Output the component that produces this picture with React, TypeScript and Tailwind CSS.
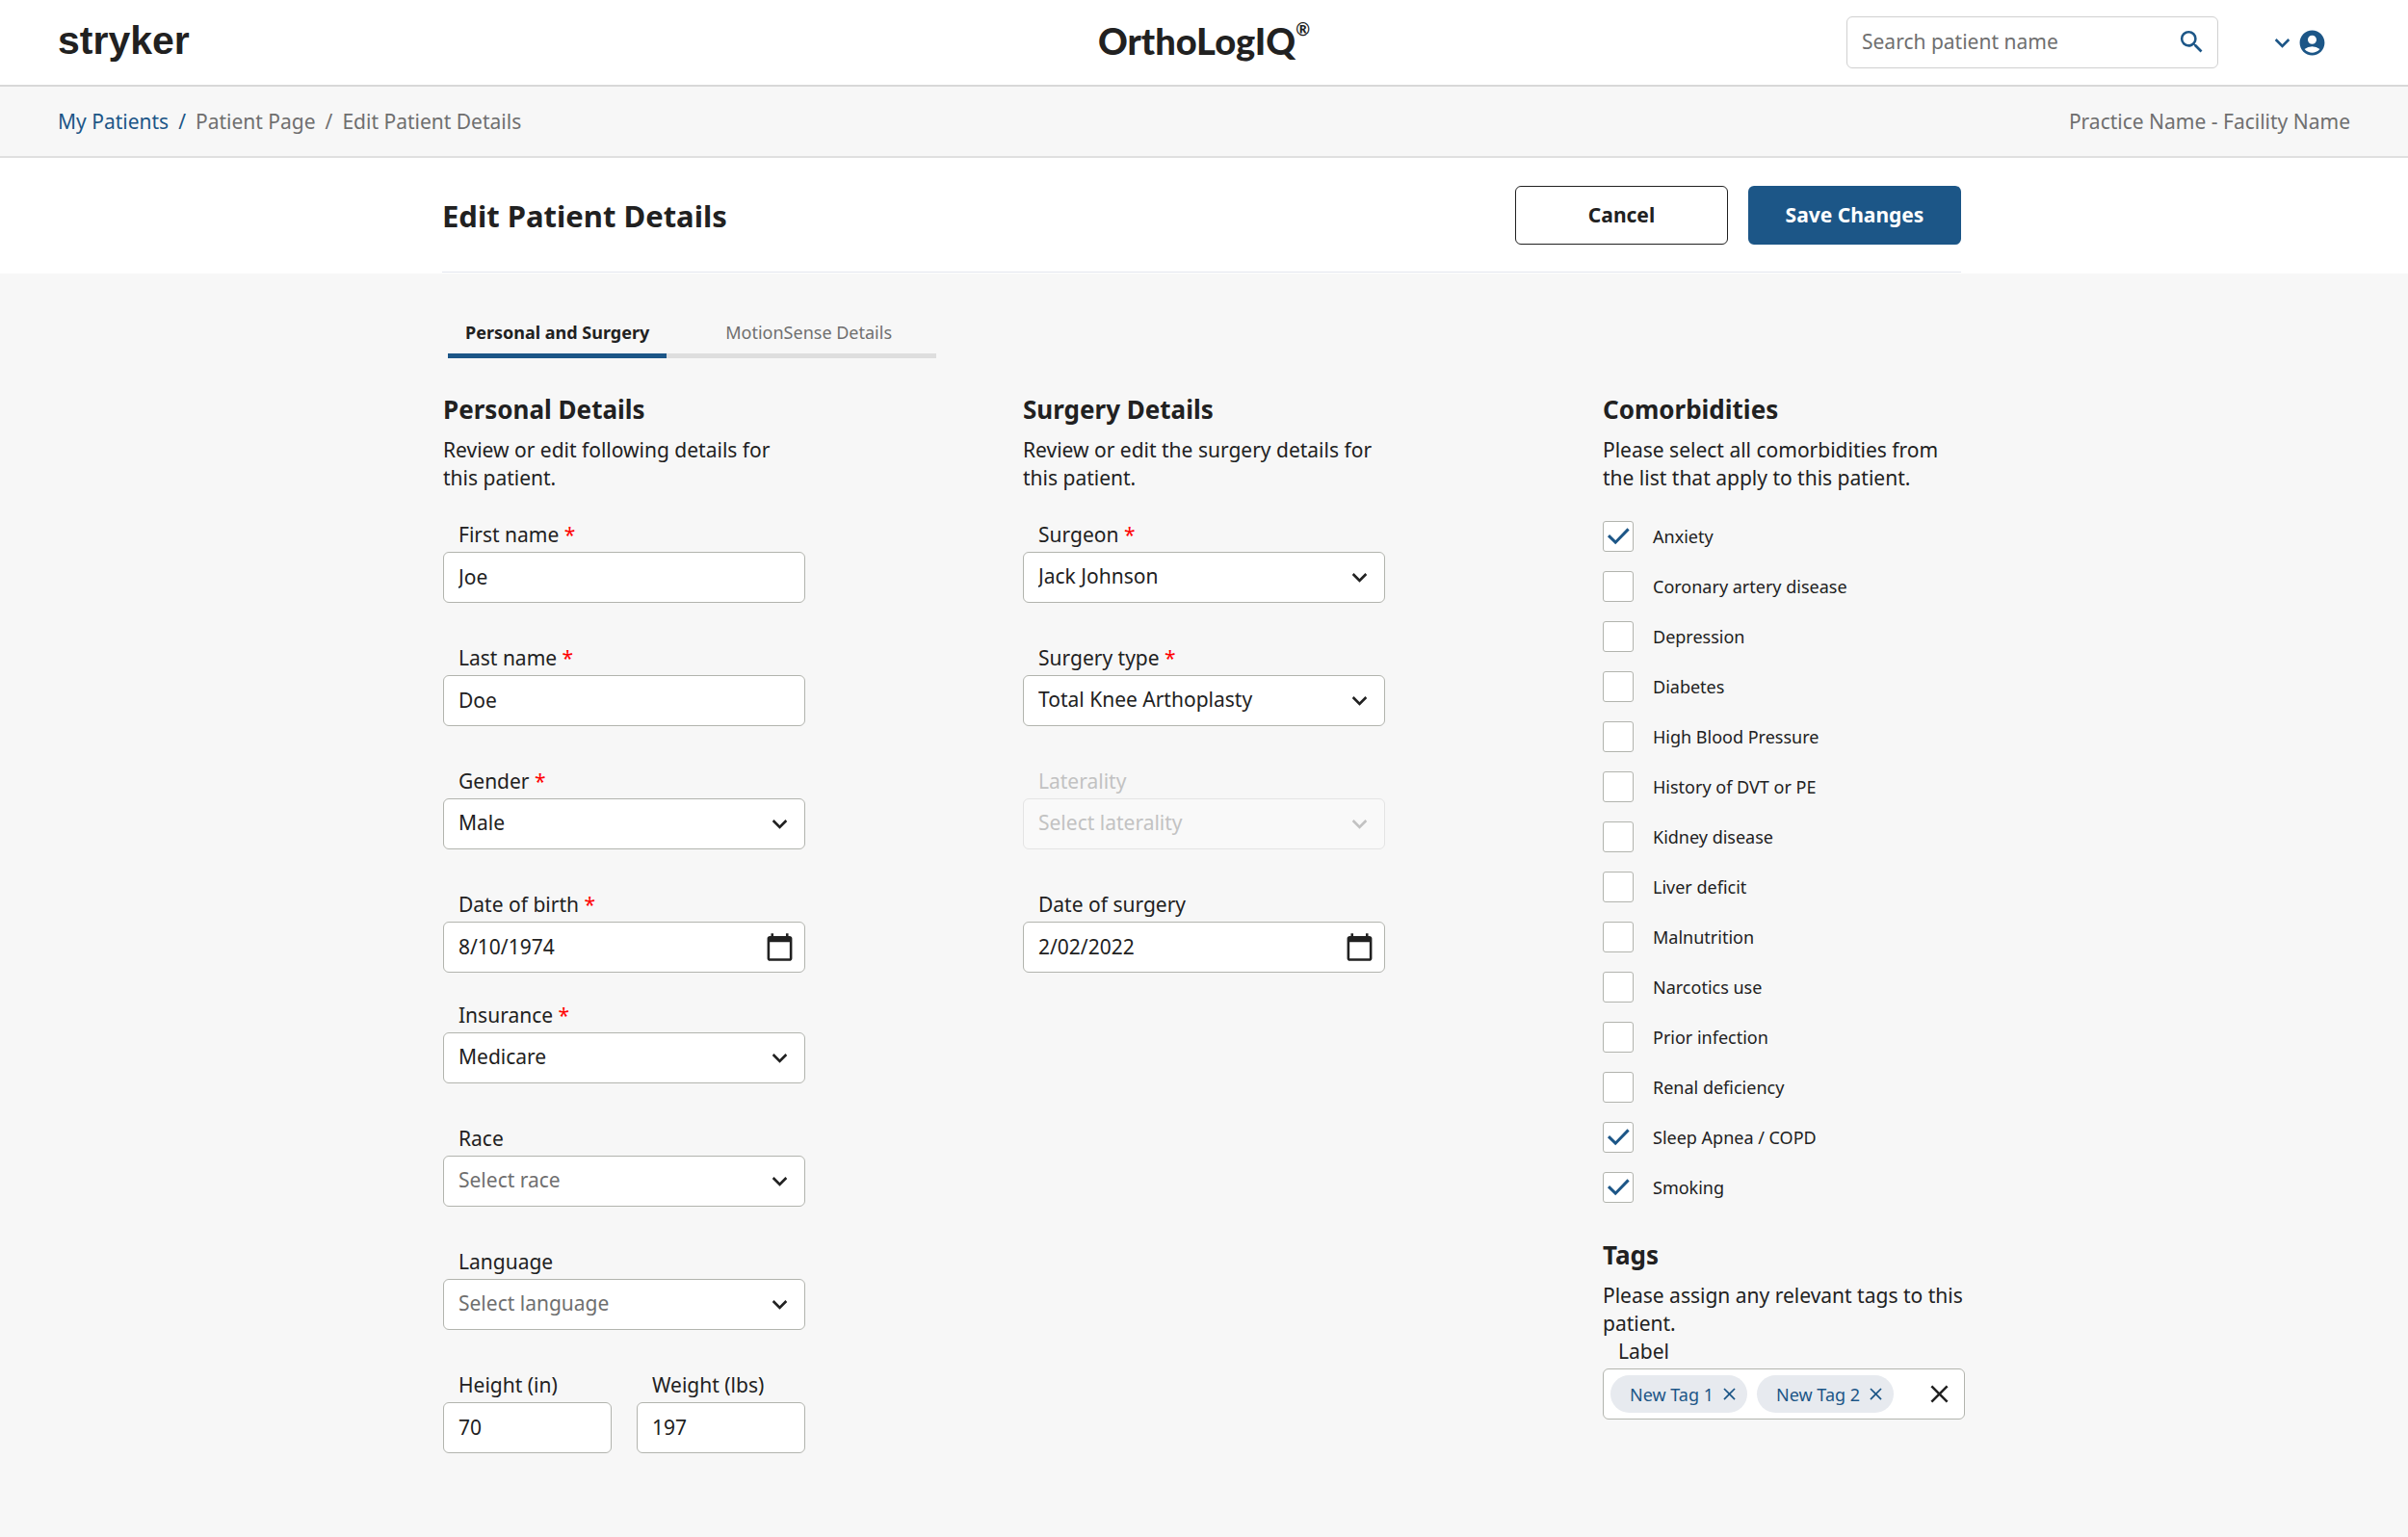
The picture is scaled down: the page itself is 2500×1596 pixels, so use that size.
import { useState } from "react";
import type { ReactNode } from "react";
import clsx from "clsx";
import {
  MdAccountCircle,
  MdCalendarToday,
  MdClose,
  MdKeyboardArrowDown,
  MdSearch,
} from "react-icons/md";

const comorbidities = [
  "Anxiety",
  "Coronary artery disease",
  "Depression",
  "Diabetes",
  "High Blood Pressure",
  "History of DVT or PE",
  "Kidney disease",
  "Liver deficit",
  "Malnutrition",
  "Narcotics use",
  "Prior infection",
  "Renal deficiency",
  "Sleep Apnea / COPD",
  "Smoking",
];

interface FieldProps {
  id: string;
  label: string;
  required?: boolean;
  disabled?: boolean;
  children: ReactNode;
}

const Field = ({ id, label, required, disabled, children }: FieldProps) => {
  return (
    <div className="flex min-w-0 flex-1 flex-col gap-[3px]">
      <label
        htmlFor={id}
        className={clsx("pl-4", disabled && "text-[#c2c2c2]")}
      >
        {label} {required && <span className="text-[#ff0000]">*</span>}
      </label>
      {children}
    </div>
  );
};

const controlStyle =
  "col-start-1 row-start-1 h-[53px] w-full min-w-0 appearance-none rounded-md border pl-[15px] pr-3 pb-[2px] outline-none focus:border-[#1c5687]";

interface InputProps {
  id: string;
  label: string;
  value: string;
  required?: boolean;
}

const TextField = ({ id, label, value, required }: InputProps) => {
  return (
    <Field id={id} label={label} required={required}>
      <input
        id={id}
        type="text"
        defaultValue={value}
        className={clsx(controlStyle, "border-[#b2b4ae] bg-white")}
      />
    </Field>
  );
};

const DateField = ({ id, label, value, required }: InputProps) => {
  return (
    <Field id={id} label={label} required={required}>
      <div className="grid items-center">
        <input
          id={id}
          type="text"
          defaultValue={value}
          className={clsx(controlStyle, "border-[#b2b4ae] bg-white")}
        />
        <button
          type="button"
          aria-label={`Open calendar for ${label}`}
          className="col-start-1 row-start-1 mr-[11px] justify-self-end"
        >
          <MdCalendarToday size={31} />
        </button>
      </div>
    </Field>
  );
};

interface SelectProps {
  id: string;
  label: string;
  options: string[];
  placeholder?: string;
  required?: boolean;
  disabled?: boolean;
}

const SelectField = ({
  id,
  label,
  options,
  placeholder,
  required,
  disabled,
}: SelectProps) => {
  const [value, setValue] = useState(placeholder ? "" : options[0]);

  return (
    <Field id={id} label={label} required={required} disabled={disabled}>
      <div className="grid items-center">
        <select
          id={id}
          value={value}
          disabled={disabled}
          onChange={(e) => setValue(e.target.value)}
          className={clsx(
            controlStyle,
            disabled
              ? "border-[#e4e4e4] bg-[#f9f9f9] text-[#c2c2c2] opacity-100"
              : "border-[#b2b4ae] bg-white",
            !disabled && !value && "text-[#6f6f6f]"
          )}
        >
          {placeholder && <option value="">{placeholder}</option>}
          {options.map((option) => (
            <option key={option} value={option}>
              {option}
            </option>
          ))}
        </select>
        <MdKeyboardArrowDown
          size={31}
          className={clsx(
            "pointer-events-none col-start-1 row-start-1 mr-[11px] justify-self-end",
            disabled && "text-[#c2c2c2]"
          )}
        />
      </div>
    </Field>
  );
};

interface SectionProps {
  title: string;
  text: string;
}

const SectionHeading = ({ title, text }: SectionProps) => {
  return (
    <div className="flex flex-col gap-[10px]">
      <h2 className="text-[26px] leading-[35px] font-bold">{title}</h2>
      <p>{text}</p>
    </div>
  );
};

const Header = () => {
  return (
    <header className="grid h-[90px] grid-cols-[1fr_auto_1fr] items-center border-b-2 border-[#d8d8d8] bg-white px-[60px]">
      <a
        href="#"
        className="justify-self-start pb-1 font-['Liberation_Sans',sans-serif] text-[41px] leading-[48px] font-bold"
      >
        stryker
      </a>
      <div className="flex items-start pb-1 font-['Lato',sans-serif] font-black">
        <span className="text-[38px] leading-[44px]">OrthoLogIQ</span>
        <span className="text-[18px] leading-[20px] font-bold">®</span>
      </div>
      <div className="flex items-center gap-[51px] justify-self-end pr-6">
        <form
          role="search"
          className="flex h-[54px] w-[386px] items-center rounded-md border border-[#d0d0d0] pr-[11px] pb-px pl-[15px]"
        >
          <input
            type="search"
            aria-label="Search patient name"
            placeholder="Search patient name"
            className="min-w-0 flex-1 outline-none placeholder:text-[#6f6f6f]"
          />
          <button type="button" aria-label="Search" className="text-[#1c5687]">
            <MdSearch size={31} />
          </button>
        </form>
        <button
          type="button"
          aria-label="Account"
          className="flex items-center text-[#1c5687]"
        >
          <MdKeyboardArrowDown size={31} />
          <MdAccountCircle size={31} />
        </button>
      </div>
    </header>
  );
};

const CheckIcon = () => {
  return (
    <svg
      viewBox="0 0 32 32"
      fill="none"
      stroke="currentColor"
      strokeWidth="3"
      aria-hidden="true"
      className="pointer-events-none col-start-1 row-start-1 size-8 text-[#1c5687]"
    >
      <path d="M6 15.2l7.2 7L26.6 8.4" />
    </svg>
  );
};

const Comorbidities = () => {
  const [selected, setSelected] = useState([
    "Anxiety",
    "Sleep Apnea / COPD",
    "Smoking",
  ]);

  const toggle = (name: string) => {
    setSelected(
      selected.includes(name)
        ? selected.filter((item) => item !== name)
        : [...selected, name]
    );
  };

  return (
    <div className="flex flex-col gap-5">
      {comorbidities.map((name) => (
        <label
          key={name}
          className="flex items-center gap-5 text-[18px] leading-[24px]"
        >
          <span className="grid place-items-center">
            <input
              type="checkbox"
              checked={selected.includes(name)}
              onChange={() => toggle(name)}
              className="col-start-1 row-start-1 size-8 appearance-none rounded-[3px] border border-[#b2b4ae] bg-white"
            />
            {selected.includes(name) && <CheckIcon />}
          </span>
          {name}
        </label>
      ))}
    </div>
  );
};

const Tags = () => {
  const [tags, setTags] = useState(["New Tag 1", "New Tag 2"]);

  return (
    <div>
      <SectionHeading
        title="Tags"
        text="Please assign any relevant tags to this patient."
      />
      <Field id="tags" label="Label">
        <div className="flex h-[53px] items-center gap-[10px] rounded-md border border-[#b2b4ae] bg-white pr-[10px] pl-[7px]">
          {tags.map((tag) => (
            <span
              key={tag}
              className="flex h-[39px] shrink-0 items-center gap-[6px] rounded-full bg-[#e7eaef] pr-2 pl-5 text-[18px] leading-[24px] text-[#1c5687]"
            >
              {tag}
              <button
                type="button"
                aria-label={`Remove ${tag}`}
                onClick={() => setTags(tags.filter((item) => item !== tag))}
              >
                <MdClose size={21} />
              </button>
            </span>
          ))}
          <input
            id="tags"
            type="text"
            className="min-w-0 flex-1 outline-none"
          />
          <button
            type="button"
            aria-label="Clear tags"
            onClick={() => setTags([])}
          >
            <MdClose size={31} />
          </button>
        </div>
      </Field>
    </div>
  );
};

const App = () => {
  return (
    <div className="min-h-screen bg-[#f7f7f7] font-['Noto_Sans',sans-serif] text-[21px] leading-[29px] text-[#212121]">
      <Header />

      <div className="flex h-[74px] items-center justify-between border-b-2 border-[#e0e0e0] px-[60px] text-[#6f6f6f]">
        <nav aria-label="Breadcrumb" className="flex gap-[10px]">
          <a href="#" className="text-[#1c5687]">
            My Patients
          </a>
          <span className="text-[#1c5687]">/</span>
          <a href="#">Patient Page</a>
          <span>/</span>
          <span>Edit Patient Details</span>
        </nav>
        <p>Practice Name - Facility Name</p>
      </div>

      <div className="bg-white pb-px">
        <div className="mx-auto max-w-[1582px] pr-[5px]">
          <div className="flex h-[119px] items-center justify-between border-b border-[#e3e6ee]">
            <h1 className="pt-[2px] text-[31px] leading-[42px] font-bold">
              Edit Patient Details
            </h1>
            <div className="flex gap-[21px] font-bold">
              <button
                type="button"
                className="h-[61px] w-[221px] rounded-md border border-[#212121] bg-white"
              >
                Cancel
              </button>
              <button
                type="submit"
                form="patient"
                className="h-[61px] w-[221px] rounded-md bg-[#1c5687] text-white"
              >
                Save Changes
              </button>
            </div>
          </div>
        </div>
      </div>

      <main className="mx-auto max-w-[1580px] pt-[49px] pb-20">
        <div
          role="tablist"
          className="ml-[5px] flex text-[18px] leading-[24px]"
        >
          <button
            type="button"
            role="tab"
            aria-selected="true"
            className="border-b-[5px] border-[#1c5687] px-[18px] pb-[10px] font-bold"
          >
            Personal and Surgery
          </button>
          <button
            type="button"
            role="tab"
            aria-selected="false"
            className="border-b-[5px] border-[#dedede] pr-[46px] pb-[10px] pl-[61px] text-[#6f6f6f]"
          >
            MotionSense Details
          </button>
        </div>

        <form
          id="patient"
          onSubmit={(e) => e.preventDefault()}
          className="mt-9 grid grid-cols-3 items-start gap-x-[226px]"
        >
          <section className="flex flex-col gap-[30px]">
            <SectionHeading
              title="Personal Details"
              text="Review or edit following details for this patient."
            />
            <div className="flex flex-col gap-[43px]">
              <TextField id="first" label="First name" value="Joe" required />
              <TextField id="last" label="Last name" value="Doe" required />
              <SelectField
                id="gender"
                label="Gender"
                options={["Male", "Female"]}
                required
              />
              <DateField
                id="dob"
                label="Date of birth"
                value="8/10/1974"
                required
              />
            </div>
            <div className="flex flex-col gap-[43px]">
              <SelectField
                id="insurance"
                label="Insurance"
                options={["Medicare"]}
                required
              />
              <SelectField
                id="race"
                label="Race"
                options={[]}
                placeholder="Select race"
              />
              <SelectField
                id="language"
                label="Language"
                options={[]}
                placeholder="Select language"
              />
              <div className="flex gap-[26px]">
                <TextField id="height" label="Height (in)" value="70" />
                <TextField id="weight" label="Weight (lbs)" value="197" />
              </div>
            </div>
          </section>

          <section className="flex flex-col gap-[30px]">
            <SectionHeading
              title="Surgery Details"
              text="Review or edit the surgery details for this patient."
            />
            <div className="flex flex-col gap-[43px]">
              <SelectField
                id="surgeon"
                label="Surgeon"
                options={["Jack Johnson"]}
                required
              />
              <SelectField
                id="surgery-type"
                label="Surgery type"
                options={["Total Knee Arthoplasty"]}
                required
              />
              <SelectField
                id="laterality"
                label="Laterality"
                options={[]}
                placeholder="Select laterality"
                disabled
              />
              <DateField
                id="surgery-date"
                label="Date of surgery"
                value="2/02/2022"
              />
            </div>
          </section>

          <section className="flex flex-col gap-[37px]">
            <div className="flex flex-col gap-[30px]">
              <SectionHeading
                title="Comorbidities"
                text="Please select all comorbidities from the list that apply to this patient."
              />
              <Comorbidities />
            </div>
            <Tags />
          </section>
        </form>
      </main>
    </div>
  );
};

export default App;
